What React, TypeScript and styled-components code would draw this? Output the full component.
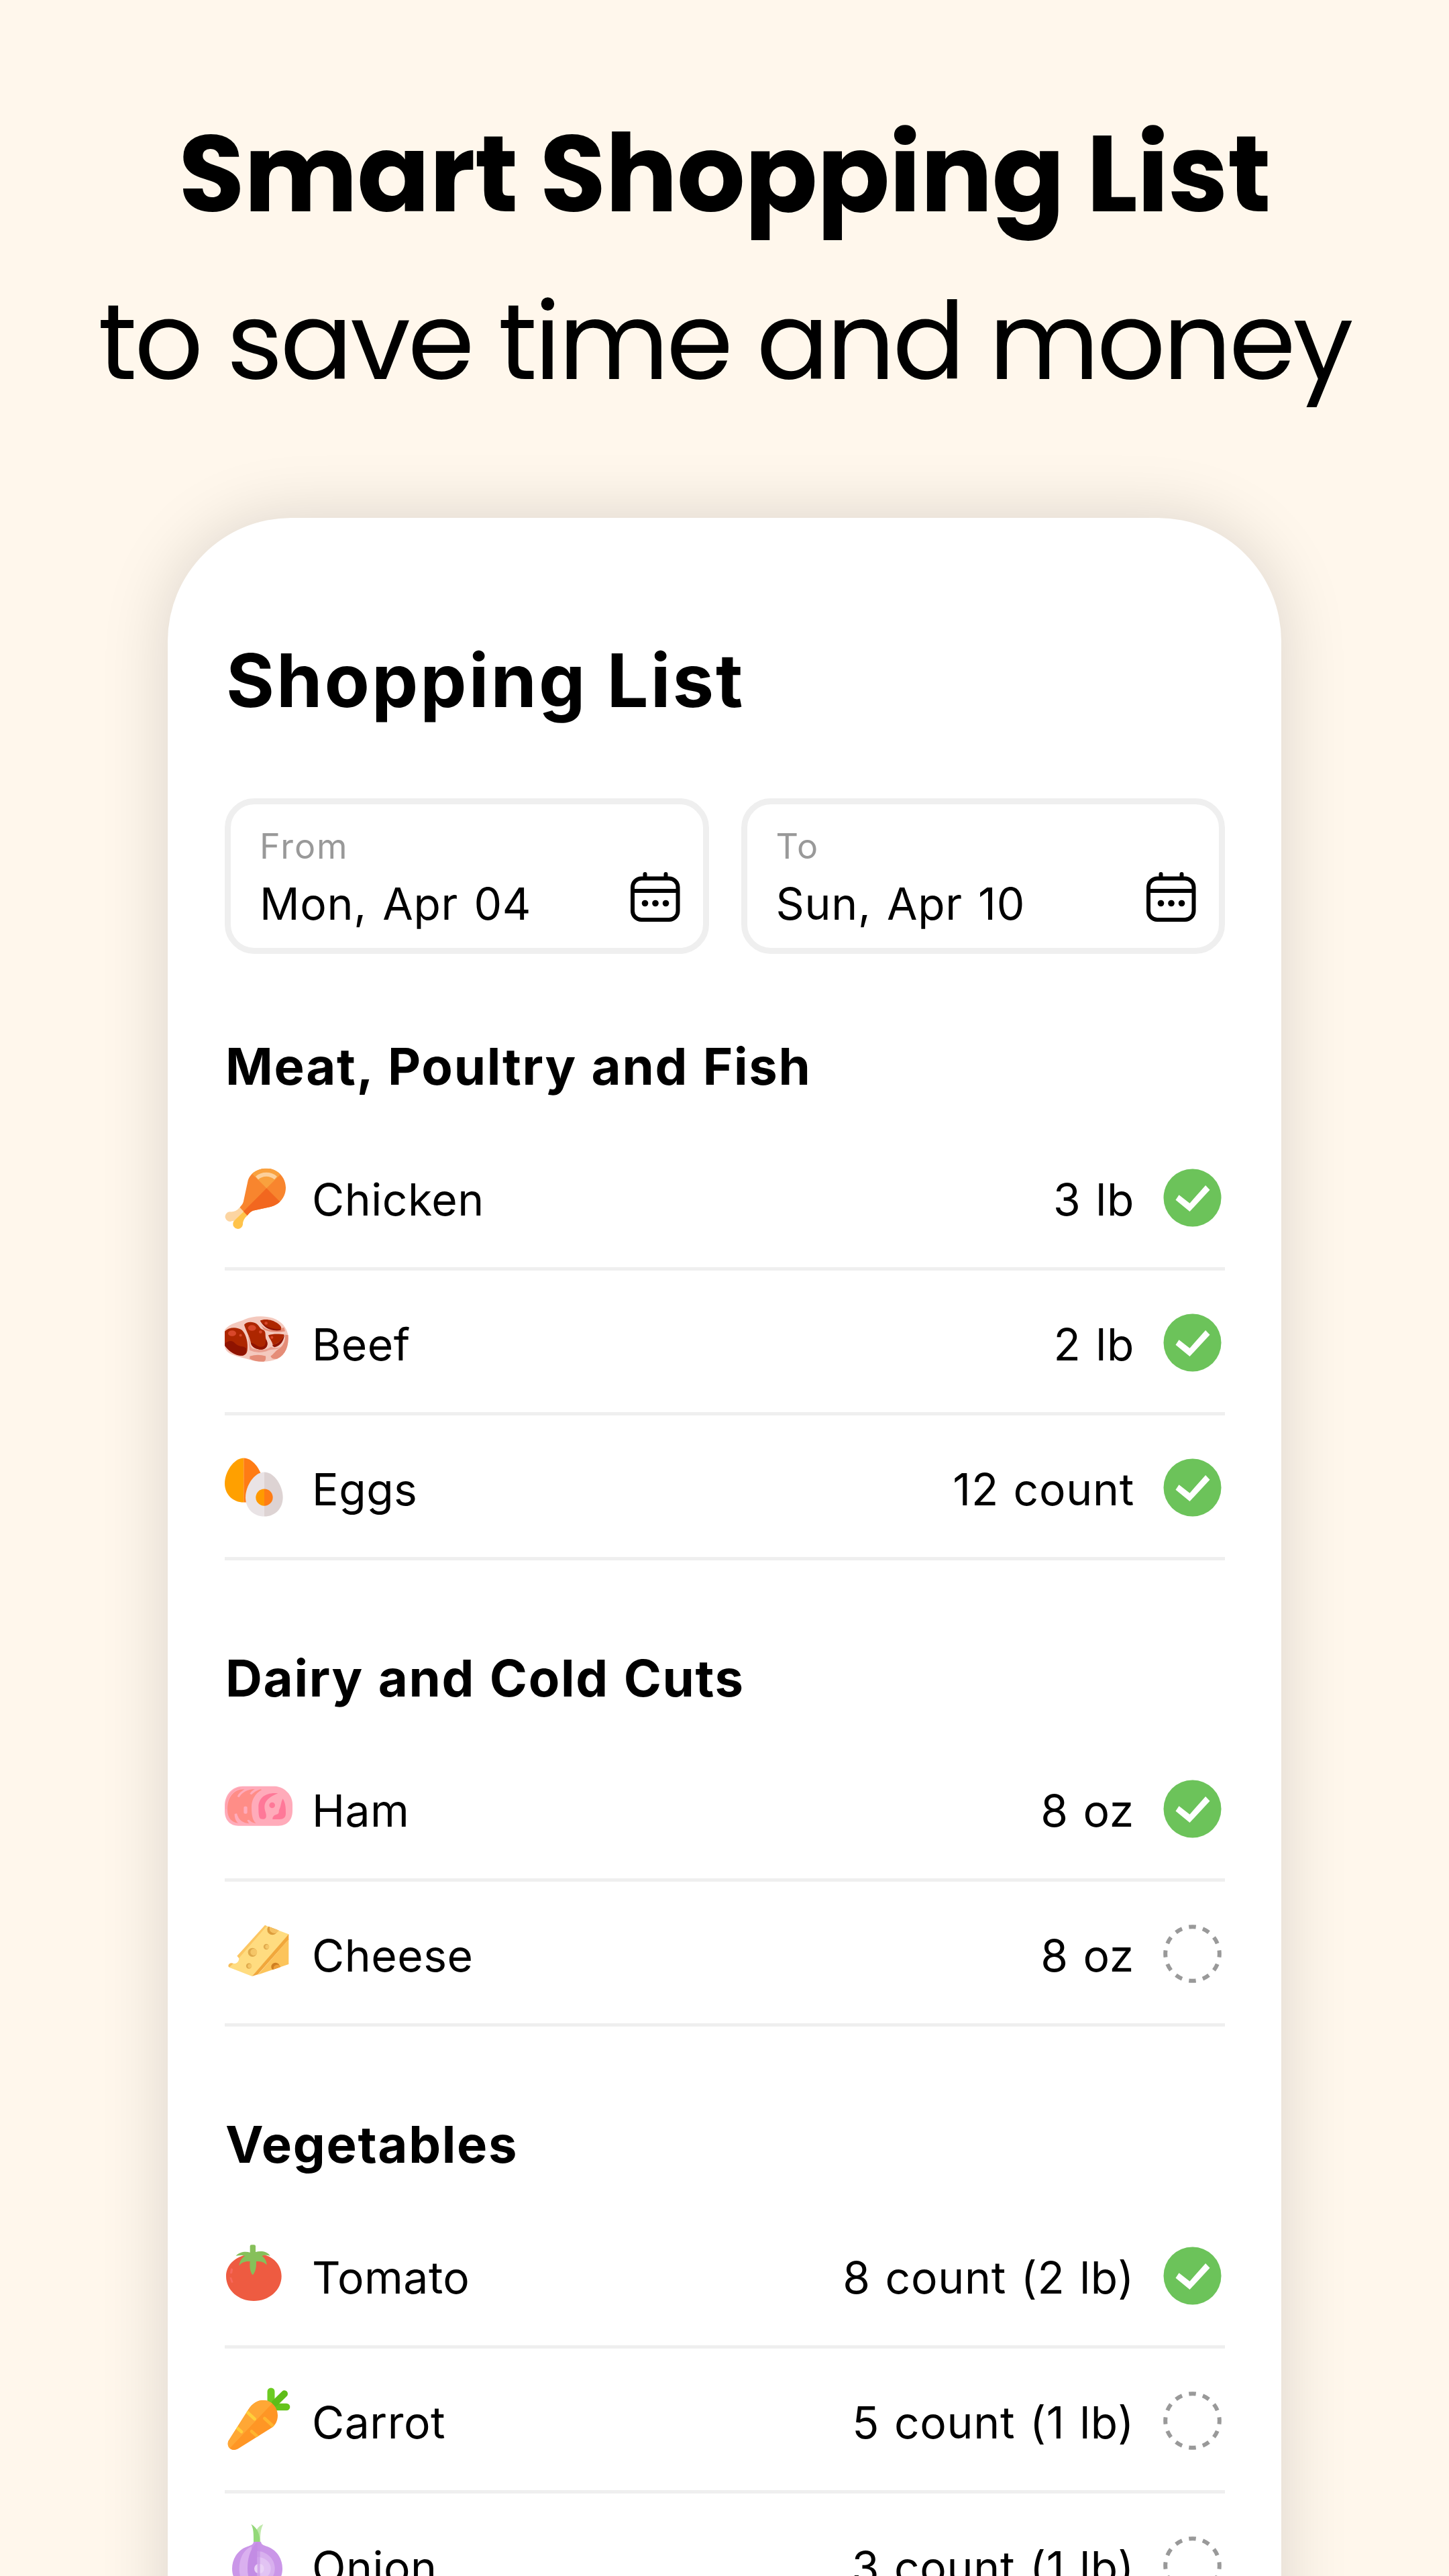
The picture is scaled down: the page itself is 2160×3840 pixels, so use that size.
import type { ReactNode } from "react";
import styled, { createGlobalStyle } from "styled-components";

const GlobalStyle = createGlobalStyle`
  * {
    box-sizing: border-box;
  }
  body {
    margin: 0;
    background: #fff7ec;
  }
`;

const Page = styled.main`
  width: 2160px;
  height: 3840px;
  overflow: hidden;
  display: flex;
  flex-direction: column;
  align-items: center;
  padding-top: 134px;
  background: #fff7ec;
  color: #000;
  font-family: "Poppins", "Inter", "Liberation Sans", sans-serif;
`;

const Headline = styled.h1`
  margin: 0;
  font-size: 160px;
  line-height: 250px;
  font-weight: 700;
  letter-spacing: -0.9px;
  white-space: nowrap;
`;

const Tagline = styled.p`
  margin: 0;
  font-size: 160px;
  line-height: 250px;
  font-weight: 400;
  letter-spacing: -3.8px;
  white-space: nowrap;
`;

const Card = styled.section`
  flex: none;
  width: 1660px;
  height: 3400px;
  margin-top: 138px;
  padding: 182px 84px 0 85px;
  border-radius: 184px 184px 0 0;
  background: #fff;
  box-shadow: 0 0 100px rgba(0, 0, 0, 0.15);
  font-family: "Inter", "Liberation Sans", sans-serif;
`;

const CardTitle = styled.h2`
  margin: 0 0 116px 2px;
  font-size: 110px;
  line-height: 120px;
  font-weight: 700;
  letter-spacing: 3px;
`;

const DateRow = styled.div`
  display: grid;
  grid-template-columns: 1fr 1fr;
  gap: 48px;
  margin-bottom: 117px;
`;

const DateField = styled.div`
  display: flex;
  justify-content: space-between;
  height: 232px;
  padding: 32px 34px 0 43px;
  border: 9px solid #efefef;
  border-radius: 44px;
`;

const DateLabel = styled.div`
  font-size: 52px;
  line-height: 62px;
  letter-spacing: 2px;
  color: #999;
`;

const DateValue = styled.div`
  margin-top: 13px;
  font-size: 66px;
  line-height: 82px;
  letter-spacing: 0.7px;
  word-spacing: 4px;
`;

const CalendarSvg = styled.svg`
  width: 74px;
  height: 75px;
  margin-top: 69px;
`;

const Group = styled.section`
  margin-bottom: 125px;
`;

const GroupTitle = styled.h3`
  margin: 0 0 38.6px 1px;
  font-size: 76px;
  line-height: 100px;
  font-weight: 700;
  letter-spacing: 1.7px;
  word-spacing: 2px;
`;

const Row = styled.div`
  display: flex;
  align-items: center;
  height: 216px;
  border-bottom: 5px solid #efefef;
`;

const FoodSvg = styled.svg`
  flex: none;
  width: 110px;
  height: 120px;
  margin-right: 20px;
`;

const Name = styled.span`
  flex: 1;
  padding-top: 9px;
  font-size: 66px;
  line-height: 80px;
  letter-spacing: 0.5px;
`;

const Amount = styled.span`
  padding-top: 9px;
  margin-right: 43px;
  font-size: 66px;
  line-height: 80px;
  letter-spacing: 0.7px;
  word-spacing: 2.5px;
`;

const MarkSvg = styled.svg`
  flex: none;
  width: 87px;
  height: 87px;
  margin: 4px 5px 0 0;
`;

const CalendarIcon = () => (
  <CalendarSvg viewBox="0 0 74 75" fill="none" stroke="#000" strokeWidth="6">
    <rect x="3" y="9.5" width="67.5" height="61.5" rx="13" />
    <path d="M3 28H70.5" />
    <path d="M21.5 3v6M52.5 3v6" strokeLinecap="round" />
    <g fill="#000" stroke="none">
      <circle cx="21.5" cy="46.5" r="4.8" />
      <circle cx="37" cy="46.5" r="4.8" />
      <circle cx="52.5" cy="46.5" r="4.8" />
    </g>
  </CalendarSvg>
);

const CheckMark = () => (
  <MarkSvg viewBox="-43.5 -43.5 87 87">
    <circle r="43" fill="#6cc35a" />
    <path
      d="M-25 3.2 -20 -4.2 -4 8.2 19.6 -18.5 26 -11.8 -4 20.6Z"
      fill="#fff"
    />
  </MarkSvg>
);

// 12 dashes, one centred on every hour
const EmptyMark = () => (
  <MarkSvg viewBox="-43.5 -43.5 87 87">
    <circle
      r="40.3"
      fill="none"
      stroke="#999"
      strokeWidth="6"
      pathLength="120"
      strokeDasharray="5 5"
      strokeDashoffset="2.5"
    />
  </MarkSvg>
);

const ChickenIcon = () => (
  <FoodSvg viewBox="75 670 330 360">
    <clipPath id="drumstick">
      <path d="M142 900C155 888 158 880 160 868L178 785C185 750 220 726 262 726C310 726 348 765 348 812C348 855 320 888 280 898L208 914C196 916 188 922 176 937Z" />
    </clipPath>
    <path
      d="M142 900Q125 922 98 920A22 22 0 1 0 108 962Q114 962 120 958L160 918Z"
      fill="#fcd5a2"
    />
    <path
      d="M160 918L176 937Q155 955 156 977A22 22 0 1 1 112 972Q113 962 120 957Z"
      fill="#ffc34a"
    />
    <g clipPath="url(#drumstick)">
      <rect x="130" y="720" width="230" height="225" fill="#f8852e" />
      <path d="M262 815L160 713H364Z" fill="#f9a13e" />
      <path d="M262 815L155 922L180 950H340L350 903Z" fill="#f2671f" />
      <path
        d="M219 769A64 64 0 0 1 303 769"
        fill="none"
        stroke="#fcd09b"
        strokeWidth="18"
      />
    </g>
  </FoodSvg>
);

const BeefIcon = () => (
  <FoodSvg viewBox="75 -1.5 330 360">
    <path
      d="M75 128C100 97 140 95 165 82C200 66 250 64 290 76C330 90 352 120 358 150C362 200 348 240 310 258C270 276 220 274 180 260C140 248 75 240 75 200Z"
      fill="#f4c9be"
    />
    <path
      d="M345 150L359 152C362 200 348 240 310 258Q285 262 280 246C300 232 300 222 320 212Q348 190 345 150Z"
      fill="#e58d78"
    />
    <path
      d="M187 247Q222 235 258 246Q261 264 250 271Q212 272 187 258Z"
      fill="#e58d78"
    />
    <path
      d="M180 150C190 180 184 205 200 212Q240 224 268 212L282 205Q300 215 330 205C310 222 280 212 262 224Q220 236 186 220Z"
      fill="#e9a091"
    />
    <path d="M233 100C250 130 290 138 340 118L345 135Q290 145 250 128Z" fill="#e58d78" />
    <path
      d="M75 136C95 115 130 115 152 130C172 150 180 190 176 220C174 240 160 245 145 244C115 240 90 220 75 198Z"
      fill="#ad2600"
    />
    <path
      d="M76 190C92 174 112 176 122 190C140 208 158 198 172 212C174 240 160 245 145 244C115 240 90 220 76 200Z"
      fill="#8f1300"
    />
    <path
      d="M162 106C172 92 200 90 218 102C230 112 232 124 245 128C264 135 252 155 262 175C272 195 262 215 240 217C215 217 195 205 192 190C188 160 168 130 162 106Z"
      fill="#ad2600"
    />
    <path
      d="M192 186C215 192 222 206 242 205C262 200 256 184 260 172C274 195 262 215 240 217C215 217 195 205 192 186ZM234 88C262 96 300 100 328 130C300 136 270 128 255 115C245 105 238 98 234 88ZM342 150C340 175 325 202 298 206Q288 204 289 196C320 190 330 170 342 150Z"
      fill="#8f1300"
    />
    <path
      d="M233 88C250 77 290 82 312 100C328 112 330 120 326 126C300 126 272 120 255 108C245 101 238 96 233 88ZM270 152C290 146 320 146 341 150C332 172 318 190 290 196C288 180 273 166 270 152Z"
      fill="#ad2600"
    />
    <g fill="#d8472a">
      <ellipse cx="108" cy="144" rx="18" ry="13" />
      <ellipse cx="197" cy="120" rx="18" ry="13" />
      <circle cx="146" cy="153" r="6" />
      <circle cx="235" cy="138" r="7" />
      <circle cx="260" cy="99" r="7" />
      <circle cx="286" cy="163" r="6" />
    </g>
  </FoodSvg>
);

const EggsIcon = () => (
  <FoodSvg viewBox="75 646.5 330 360">
    <path d="M160 702C115 702 75 765 75 815C75 865 112 900 160 900Z" fill="#ffa000" />
    <path d="M160 702C205 702 245 765 245 815C245 865 207 900 160 900Z" fill="#ff7c14" />
    <path d="M252 765C206 765 168 828 168 878C168 928 204 963 252 963Z" fill="#e9e3e5" />
    <path d="M252 765C298 765 335 828 335 878C335 928 299 963 252 963Z" fill="#ddd3d3" />
    <path d="M252 840A38 38 0 0 0 252 916Z" fill="#ff9a00" />
    <path d="M252 840A38 38 0 0 1 252 916Z" fill="#ff7c14" />
  </FoodSvg>
);

const HamIcon = () => (
  <FoodSvg viewBox="30 -45 330 360">
    <path
      d="M110 38H255C300 42 333 78 333 120V148C333 190 308 215 270 215H90C55 215 30 190 30 150V120C32 75 65 38 110 38Z"
      fill="#ffabba"
    />
    <path
      d="M42 145C40 90 70 50 118 52C104 62 92 70 86 84L94 88C108 66 130 52 164 51C156 56 146 64 142 72L150 76C165 62 175 56 190 52L196 54C165 70 150 100 150 130C150 160 152 190 170 204C155 202 146 196 138 188L130 190C134 200 138 203 140 205C110 202 92 190 84 160L74 162C74 184 82 196 90 203C60 200 43 180 42 145Z"
      fill="#ff8d87"
    />
    <path d="M36 140C34 95 60 52 100 46" fill="none" stroke="#ff9fa9" strokeWidth="4" />
    <rect x="115" y="128" width="16" height="33" rx="6" fill="#ffabba" />
    <path
      d="M181 130C181 90 215 64 268 70C230 85 208 105 208 130C208 150 218 160 215 176C212 186 200 187 190 184C182 178 181 160 181 130Z"
      fill="#ff7898"
    />
    <path
      d="M290 94C303 115 303 140 303 160C303 180 290 186 275 186L244 186C243 175 250 167 262 164C276 162 270 150 274 142C282 128 280 112 290 94Z"
      fill="#ff7898"
    />
    <circle cx="242" cy="123" r="13" fill="#ff7898" />
  </FoodSvg>
);

const CheeseIcon = () => (
  <FoodSvg viewBox="30 603 330 360">
    <path d="M210 659L220 664L98 812L85 797Z" fill="#fcc662" />
    <path d="M46 842C46 830 58 826 68 830L80 858L48 847Z" fill="#f7bd5a" />
    <path
      d="M218 663L316 700V706L152 888L50 848L68 831C84 833 94 822 94 806Z"
      fill="#ffdc80"
    />
    <path d="M316 700V724L178 880L152 888Z" fill="#f1a73b" />
    <path d="M316 722V834L178 881Z" fill="#fcc45b" />
    <clipPath id="cheese-top">
      <path d="M210 659L316 700L290 740H200Z" />
    </clipPath>
    <clipPath id="cheese-side">
      <path d="M316 722V834L178 881Z" />
    </clipPath>
    <g clipPath="url(#cheese-top)">
      <circle cx="243" cy="680" r="23" fill="#dd9d3c" />
      <circle cx="252" cy="674" r="22" fill="#f5c162" />
    </g>
    <g clipPath="url(#cheese-side)">
      <circle cx="257" cy="846" r="19" fill="#cf7f22" />
      <circle cx="265" cy="853" r="17" fill="#ee9f38" />
    </g>
    <circle cx="154" cy="781" r="20" fill="#dfa94b" />
    <circle cx="160" cy="780" r="15" fill="#f5c667" />
    <circle cx="216" cy="756" r="12.5" fill="#dfa94b" />
    <circle cx="220" cy="756" r="9" fill="#f5c667" />
    <circle cx="138" cy="842" r="12.5" fill="#dfa94b" />
    <circle cx="142" cy="842" r="9" fill="#f5c667" />
  </FoodSvg>
);

const TomatoIcon = () => (
  <FoodSvg viewBox="30 -27 330 360">
    <path
      d="M160 62C235 58 284 105 284 162C284 225 228 273 160 273C92 273 36 225 36 162C36 110 80 66 160 62Z"
      fill="#ee5b41"
    />
    <path
      d="M57 127L67 130L63 150L54 150ZM52 168L60 168L68 190L60 192Z"
      fill="#f7685c"
    />
    <path
      d="M143 28Q143 22 150 22H161Q168 22 168 28V54C190 48 220 50 233 71C218 66 205 68 196 72C208 80 218 94 218 112C205 98 190 95 171 96C172 120 168 145 155 157C144 145 140 120 143 96C122 94 106 100 94 115C96 98 106 80 120 72C108 66 94 70 80 71C96 52 125 50 143 56Z"
      fill="#86c05a"
    />
  </FoodSvg>
);

const CarrotIcon = () => (
  <FoodSvg viewBox="30 621 330 360">
    <clipPath id="carrot">
      <path d="M46 900L135 760C155 730 175 717 203 717C240 717 267 750 267 785C267 810 255 832 235 843L90 934C75 943 58 940 50 929C43 920 42 910 46 900Z" />
    </clipPath>
    <g strokeLinecap="round" fill="none">
      <path d="M237 678V725" stroke="#6ccb22" strokeWidth="33" />
      <path d="M250 747H306" stroke="#65c41c" strokeWidth="32" />
      <path d="M254 730L297 688" stroke="#5fbd18" strokeWidth="30" />
    </g>
    <g clipPath="url(#carrot)">
      <rect x="40" y="710" width="230" height="235" fill="#ff9625" />
      <path d="M40 945L250 723L240 700H40Z" fill="#ffa735" />
      <g strokeLinecap="round" fill="none" strokeWidth="14">
        <path d="M125 765L164 801M78 834L105 858" stroke="#ffcf3b" />
        <path d="M208 798L250 836M150 856L190 892" stroke="#ffb52f" />
      </g>
    </g>
  </FoodSvg>
);

const OnionIcon = () => (
  <FoodSvg viewBox="30 1269 330 360">
    <path d="M202 1271C182 1280 172 1290 170 1310V1352H190C188 1320 190 1295 202 1271Z" fill="#bfe9aa" />
    <path d="M148 1271C160 1292 159 1320 159 1354H187C188 1320 180 1290 148 1271Z" fill="#93d879" />
    <path
      d="M159 1350H192C194 1364 205 1366 220 1371C262 1386 288 1425 288 1470C288 1530 240 1575 176 1575C112 1575 63 1530 63 1470C63 1425 90 1385 132 1371C146 1366 158 1364 159 1350Z"
      fill="#ca96e8"
    />
    <path d="M150 1370C110 1388 95 1430 95 1470C95 1510 110 1550 150 1572Z" fill="#dab0ef" />
    <path d="M176 1350C140 1385 132 1430 132 1470C132 1510 145 1550 176 1575Z" fill="#c38ce4" />
    <path d="M176 1392C215 1392 254 1425 254 1470C254 1515 215 1548 176 1548Z" fill="#d8b0ee" />
    <path d="M176 1418C205 1418 236 1438 236 1470C236 1502 205 1522 176 1522Z" fill="#e2c3f3" />
    <circle cx="184" cy="1470" r="22" fill="#ead3f6" />
    <path d="M176 1350H188V1575H176Z" fill="#c38ce4" opacity="0.6" />
  </FoodSvg>
);

type Item = {
  icon: ReactNode;
  name: string;
  amount: string;
  checked?: boolean;
};

const groups: { title: string; items: Item[] }[] = [
  {
    title: "Meat, Poultry and Fish",
    items: [
      { icon: <ChickenIcon />, name: "Chicken", amount: "3 lb", checked: true },
      { icon: <BeefIcon />, name: "Beef", amount: "2 lb", checked: true },
      { icon: <EggsIcon />, name: "Eggs", amount: "12 count", checked: true },
    ],
  },
  {
    title: "Dairy and Cold Cuts",
    items: [
      { icon: <HamIcon />, name: "Ham", amount: "8 oz", checked: true },
      { icon: <CheeseIcon />, name: "Cheese", amount: "8 oz" },
    ],
  },
  {
    title: "Vegetables",
    items: [
      { icon: <TomatoIcon />, name: "Tomato", amount: "8 count (2 lb)", checked: true },
      { icon: <CarrotIcon />, name: "Carrot", amount: "5 count (1 lb)" },
      { icon: <OnionIcon />, name: "Onion", amount: "3 count (1 lb)" },
    ],
  },
];

const dates = [
  { label: "From", value: "Mon, Apr 04" },
  { label: "To", value: "Sun, Apr 10" },
];

const App = () => {
  return (
    <>
      <GlobalStyle />
      <Page>
        <Headline>Smart Shopping List</Headline>
        <Tagline>to save time and money</Tagline>
        <Card>
          <CardTitle>Shopping List</CardTitle>
          <DateRow>
            {dates.map((date) => (
              <DateField key={date.label}>
                <div>
                  <DateLabel>{date.label}</DateLabel>
                  <DateValue>{date.value}</DateValue>
                </div>
                <CalendarIcon />
              </DateField>
            ))}
          </DateRow>
          {groups.map((group) => (
            <Group key={group.title}>
              <GroupTitle>{group.title}</GroupTitle>
              {group.items.map((item) => (
                <Row key={item.name}>
                  {item.icon}
                  <Name>{item.name}</Name>
                  <Amount>{item.amount}</Amount>
                  {item.checked ? <CheckMark /> : <EmptyMark />}
                </Row>
              ))}
            </Group>
          ))}
        </Card>
      </Page>
    </>
  );
};

export default App;
